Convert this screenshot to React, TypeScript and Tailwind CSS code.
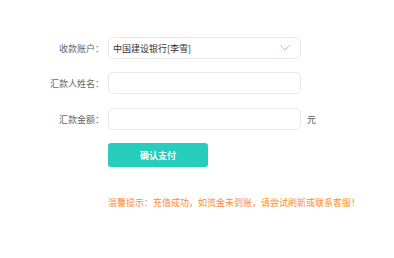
import React from "react";

const font = { fontFamily: '"Noto Sans CJK SC", "Noto Sans", sans-serif' };

function Label({ children }: { children: React.ReactNode }) {
  return (
    <div className="w-[105px] shrink-0 text-right text-[9px] leading-none text-[#666] pr-[1px]">
      {children}
    </div>
  );
}

export default function App() {
  return (
    <div className="w-[394px] h-[258px] bg-white" style={font}>
      <div className="pt-[37px] flex flex-col">
        <div className="flex items-center h-[22px]">
          <Label>收款账户：</Label>
          <div className="ml-[3px] w-[193px] h-[22px] border border-[#e8e8e8] rounded-[5px] flex items-center justify-between pl-[4px] pr-[10px]">
            <span className="text-[9px] leading-none text-[#333]">中国建设银行[李雪]</span>
            <svg width="10" height="6" viewBox="0 0 10 6" className="mr-[0px]">
              <path d="M0.5 0.5 L5 5 L9.5 0.5" fill="none" stroke="#7fdcd6" strokeWidth="1" />
            </svg>
          </div>
        </div>
        <div className="flex items-center h-[22px] mt-[13px]">
          <Label>汇款人姓名：</Label>
          <div className="ml-[3px] w-[193px] h-[22px] border border-[#e8e8e8] rounded-[5px]" />
        </div>
        <div className="flex items-center h-[22px] mt-[14px]">
          <Label>汇款金额：</Label>
          <div className="ml-[3px] w-[193px] h-[22px] border border-[#e8e8e8] rounded-[5px]" />
          <span className="ml-[6px] text-[9px] leading-none text-[#555]">元</span>
        </div>
        <div className="flex mt-[13px] pl-[108px]">
          <div className="w-[100px] h-[24px] rounded-[3px] bg-[#26ccbc] flex items-center justify-center text-white text-[9px] font-bold leading-none">
            确认支付
          </div>
        </div>
        <div className="mt-[31px] pl-[108px] text-[9px] leading-none text-[#ff8a2a] whitespace-nowrap">
          温馨提示：充值成功，如资金未到账，请尝试刷新或联系客服！
        </div>
      </div>
    </div>
  );
}
